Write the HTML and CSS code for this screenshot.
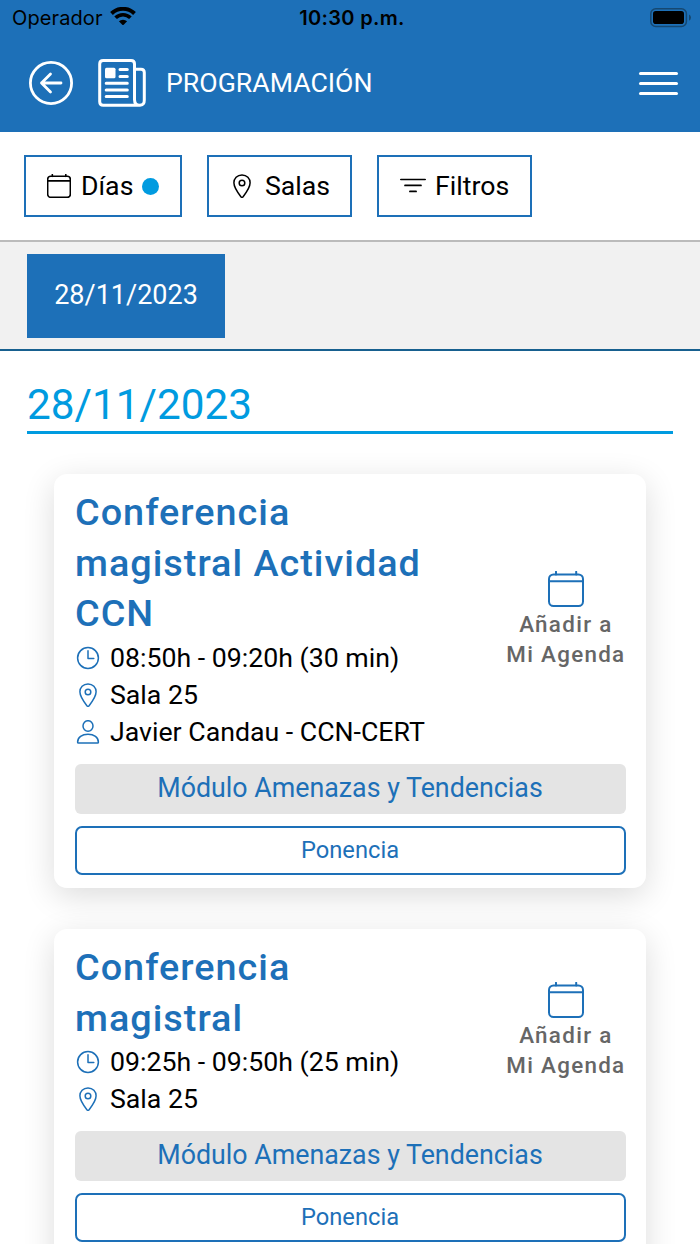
FILE: index.html
```
<!DOCTYPE html>
<html lang="es">
<head>
    <meta charset="UTF-8">
    <meta name="viewport" content="width=device-width, initial-scale=1.0">
    <title>Programación</title>
    <link rel="stylesheet" href="styles.css">
</head>
<body>
    <!-- shared icons -->
    <svg class="sprite">
        <symbol id="calendar" viewBox="0 0 36 36">
            <rect x="1" y="3.4" width="34" height="31.6" rx="4.5"/>
            <path d="M1 10.3H35M8 .8V3.5M28.2 .8V3.5"/>
        </symbol>
        <symbol id="pin" viewBox="0 0 24 24">
            <path d="M12 .9C7.100 .9 3.900 4.500 3.900 8.800C3.900 13.500 8 19 10.900 22.700Q12 24 13.100 22.700C16 19 20.100 13.500 20.100 8.800C20.100 4.500 16.900 .9 12 .9Z"/>
            <circle cx="12" cy="9" r="2.800"/>
        </symbol>
        <symbol id="clock" viewBox="0 0 24 24">
            <circle cx="12" cy="12" r="10.400"/>
            <path d="M12 4.800V12.600H17.800"/>
        </symbol>
        <symbol id="person" viewBox="0 0 24 24">
            <ellipse cx="12" cy="6" rx="5" ry="5.300"/>
            <path d="M1.600 22.200C1.600 17.300 6 14.300 12 14.300S22.400 17.300 22.400 22.200Q22.400 23.100 21.500 23.100H2.500Q1.600 23.100 1.600 22.200Z"/>
        </symbol>
    </svg>

    <div class="status">
        <div class="carrier">
            <span>Operador</span>
            <svg class="wifi" width="26" height="19" viewBox="0 0 26 19">
                <path d="M1.500 6.500A16.500 16.500 0 0 1 24.500 6.500" stroke-width="4"/>
                <path d="M5.600 10.800A10.500 10.500 0 0 1 20.400 10.800" stroke-width="3.700"/>
                <path class="dot" d="M8.900 14.300A5.900 5.900 0 0 1 17.100 14.300L13.700 17.800Q13 18.400 12.300 17.800Z"/>
            </svg>
        </div>
        <span class="hour">10:30 p.m.</span>
        <svg class="battery" width="42" height="20" viewBox="0 0 42 20">
            <rect class="shell" x=".8" y=".8" width="35.600" height="17.600" rx="5"/>
            <rect x="3" y="3" width="31" height="13" rx="2.800"/>
            <path class="tip" d="M39 6.500Q41 7.300 41 9.600T39 12.700Z"/>
        </svg>
    </div>

    <header class="header">
        <svg class="back" width="44" height="44" viewBox="0 0 44 44">
            <circle cx="22" cy="22" r="20.600"/>
            <path d="M32 22H12.500M21.500 13L12.500 22L21.500 31"/>
        </svg>
        <svg class="news" width="48" height="48" viewBox="0 0 48 48">
            <path d="M42 46.200H5.200Q1.700 46.200 1.700 42.700V5Q1.700 1.500 5.200 1.500H33Q36.500 1.500 36.500 5V40.500Q36.500 46.200 41.500 46.200T46.300 41V13.500Q46.300 10.300 43 10.300H36.500"/>
            <path d="M22 10.500H29.300M22 17.500H29.300M8.200 24.300H29.300M8.200 31H29.300M8.200 37.600H29.300"/>
            <rect x="7" y="8.700" width="10.500" height="10.500" rx="1.500"/>
        </svg>
        <h1>PROGRAMACIÓN</h1>
        <div class="menu"><i></i><i></i><i></i></div>
    </header>

    <div class="filters">
        <button class="dias"><svg><use href="#calendar"/></svg>Días<i class="active"></i></button>
        <button class="salas"><svg><use href="#pin"/></svg>Salas</button>
        <button class="filtros">
            <svg viewBox="0 0 26 24"><path d="M.8 5.500H25.200M5 11.400H21M9.900 17.400H16.100"/></svg>Filtros
        </button>
    </div>

    <div class="dates">
        <span class="date">28/11/2023</span>
    </div>

    <main>
        <h2>28/11/2023</h2>

        <div class="card">
            <div class="top">
                <div class="info">
                    <h3>Conferencia<br>magistral Actividad<br>CCN</h3>
                    <p><svg><use href="#clock"/></svg>08:50h - 09:20h (30 min)</p>
                    <p><svg><use href="#pin"/></svg>Sala 25</p>
                    <p><svg><use href="#person"/></svg>Javier Candau - CCN-CERT</p>
                </div>
                <div class="agenda">
                    <svg><use href="#calendar"/></svg>
                    <span>Añadir a<br>Mi Agenda</span>
                </div>
            </div>
            <div class="module">Módulo Amenazas y Tendencias</div>
            <div class="type">Ponencia</div>
        </div>

        <div class="card">
            <div class="top">
                <div class="info">
                    <h3>Conferencia<br>magistral</h3>
                    <p><svg><use href="#clock"/></svg>09:25h - 09:50h (25 min)</p>
                    <p><svg><use href="#pin"/></svg>Sala 25</p>
                </div>
                <div class="agenda">
                    <svg><use href="#calendar"/></svg>
                    <span>Añadir a<br>Mi Agenda</span>
                </div>
            </div>
            <div class="module">Módulo Amenazas y Tendencias</div>
            <div class="type">Ponencia</div>
        </div>
    </main>
</body>
</html>
```
FILE: styles.css
```
* { margin: 0; padding: 0; box-sizing: border-box; }
body {
    width: 700px; height: 1244px;
    overflow: hidden;
    background-color: #FFF;
    color: #000;
    font-family: Roboto, sans-serif;
}
svg {
    flex-shrink: 0;
    fill: none;
    stroke: currentColor;
    stroke-linecap: round;
    stroke-linejoin: round;
}
.sprite { display: none; }

/* status bar */
.status {
    display: grid;
    grid-template-columns: 1fr auto 1fr;
    align-items: center;
    height: 36px;
    padding: 0 8px 0 12px;
    background-color: #1D70B8;
    font-family: Inter, sans-serif;
    font-size: 20px;
}
.carrier { display: flex; align-items: center; gap: 7px; letter-spacing: .1px; }
.wifi { margin-top: -3px; stroke-linecap: butt; }
.wifi .dot { fill: #000; stroke: none; }
.hour { font-weight: 600; letter-spacing: .35px; }
.battery { justify-self: end; margin-top: -1px; fill: #000; stroke: none; }
.battery .shell { fill: none; stroke: #164871; stroke-width: 1.5; }
.battery .tip { fill: #164871; }

/* header */
.header {
    display: flex;
    align-items: center;
    height: 96px;
    padding: 0 22px 2px 29px;
    background-color: #1D70B8;
    color: #FFF;
}
.back { stroke-width: 2.8; }
.news { margin-left: 25px; stroke-width: 3; }
.news rect { fill: #FFF; stroke: none; }
h1 {
    margin-left: 20px;
    font-size: 26.7px;
    font-weight: 400;
    line-height: 32px;
}
.menu {
    display: flex;
    flex-direction: column;
    gap: 7px;
    width: 39px;
    margin: 1px 0 0 auto;
}
.menu i { height: 3px; border-radius: 2px; background-color: #FFF; }

/* filters */
.filters {
    display: flex;
    gap: 25px;
    height: 110px;
    padding: 23px 24px;
    border-bottom: 2px solid #BBB;
}
.filters button {
    display: flex;
    align-items: center;
    height: 62px;
    border: 2px solid #1D70B8;
    background-color: #FFF;
    color: #000;
    font-family: Roboto, sans-serif;
    font-size: 26.7px;
}
.filters svg { width: 24px; height: 24px; stroke-width: 1.5; }
.filters .dias { width: 158px; padding-left: 21px; }
.filters .dias svg { margin-right: 10px; stroke-width: 2.4; }
.filters .salas { width: 145px; padding-left: 21px; }
.filters .salas svg { margin-right: 11px; }
.filters .filtros { width: 155px; padding-left: 21px; }
.filters .filtros svg { width: 26px; margin-right: 9px; stroke-width: 1.7; }
.active {
    width: 17px; height: 17px;
    margin-left: 9px;
    border-radius: 50%;
    background-color: #009BE0;
}

/* day tabs */
.dates {
    height: 109px;
    padding: 12px 27px;
    border-bottom: 2px solid #17608F;
    background-color: #F1F1F1;
}
.date {
    display: block;
    width: 198px; height: 84px;
    background-color: #1D70B8;
    color: #FFF;
    font-size: 27px;
    line-height: 82px;
    text-align: center;
}

main {
    height: 893px;
    padding: 27px 27px 0;
    overflow: hidden;
}
h2 {
    height: 56px;
    margin-bottom: 40px;
    border-bottom: 3px solid #009BE0;
    color: #009BE0;
    font-size: 42.3px;
    font-weight: 400;
    line-height: 53px;
}

/* talks */
.card {
    height: 414px;
    margin: 0 27px 41px;
    padding: 13px 20.5px;
    border-radius: 13px;
    background-color: #FFF;
    box-shadow: 0 8px 32px rgba(0, 0, 0, .14);
}
.top {
    display: flex;
    justify-content: space-between;
    align-items: center;
    margin-bottom: 13px;
}
h3 {
    padding-left: .5px;
    color: #1D70B8;
    font-size: 37.8px;
    font-weight: 500;
    letter-spacing: 1px;
    line-height: 50.7px;
}
.info p {
    display: flex;
    align-items: center;
    gap: 10px;
    height: 37.3px;
    padding-left: 1.5px;
    font-size: 26.7px;
}
.info svg { width: 24px; height: 24px; color: #1D70B8; stroke-width: 1.5; }
.agenda {
    display: flex;
    flex-direction: column;
    align-items: center;
    padding-top: 2px;
    color: #666;
    font-size: 22.4px;
    font-weight: 500;
    letter-spacing: 1.3px;
    line-height: 30.5px;
    text-align: center;
}
.agenda svg { width: 36px; height: 36px; margin-bottom: 2px; color: #1D70B8; stroke-width: 2; }
.module {
    height: 50px;
    border-radius: 6px;
    background-color: #E4E4E4;
    color: #1D70B8;
    font-size: 26.8px;
    line-height: 49px;
    text-align: center;
}
.type {
    height: 49px;
    margin-top: 12px;
    border: 2px solid #1D70B8;
    border-radius: 7px;
    color: #1D70B8;
    font-size: 23.7px;
    line-height: 45px;
    text-align: center;
}
```
